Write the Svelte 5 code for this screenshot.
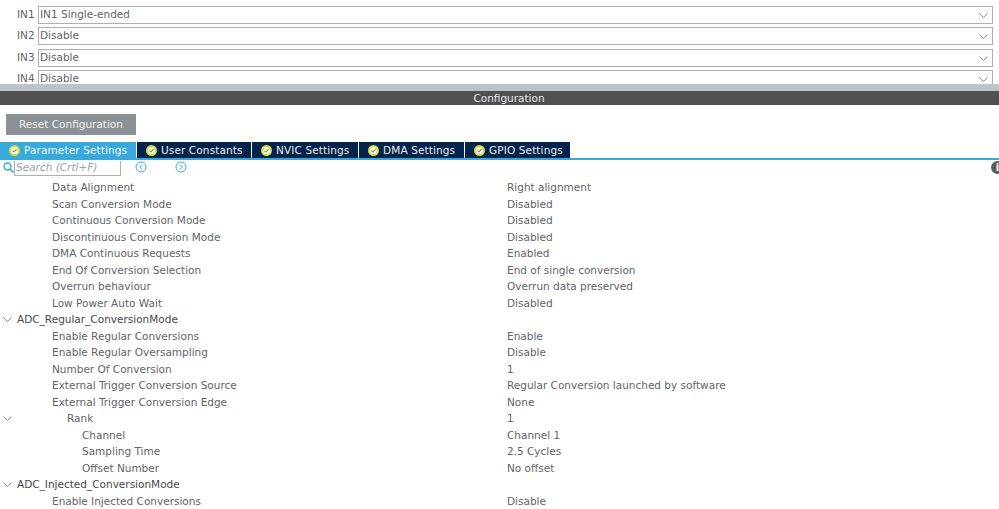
<script lang="ts">
  const inputs = [
    { label: "IN1", value: "IN1 Single-ended" },
    { label: "IN2", value: "Disable" },
    { label: "IN3", value: "Disable" },
    { label: "IN4", value: "Disable" },
  ];

  const tabs = [
    { label: "Parameter Settings", width: 136 },
    { label: "User Constants", width: 114 },
    { label: "NVIC Settings", width: 106 },
    { label: "DMA Settings", width: 105 },
    { label: "GPIO Settings", width: 105 },
  ];

  // level: 0 = group, 1 = parameter, 2 = rank, 3 = rank child
  const rows = [
    { level: 1, name: "Data Alignment", value: "Right alignment" },
    { level: 1, name: "Scan Conversion Mode", value: "Disabled" },
    { level: 1, name: "Continuous Conversion Mode", value: "Disabled" },
    { level: 1, name: "Discontinuous Conversion Mode", value: "Disabled" },
    { level: 1, name: "DMA Continuous Requests", value: "Enabled" },
    { level: 1, name: "End Of Conversion Selection", value: "End of single conversion" },
    { level: 1, name: "Overrun behaviour", value: "Overrun data preserved" },
    { level: 1, name: "Low Power Auto Wait", value: "Disabled" },
    { level: 0, name: "ADC_Regular_ConversionMode", value: "", open: true },
    { level: 1, name: "Enable Regular Conversions", value: "Enable" },
    { level: 1, name: "Enable Regular Oversampling", value: "Disable" },
    { level: 1, name: "Number Of Conversion", value: "1" },
    { level: 1, name: "External Trigger Conversion Source", value: "Regular Conversion launched by software" },
    { level: 1, name: "External Trigger Conversion Edge", value: "None" },
    { level: 2, name: "Rank", value: "1", open: true },
    { level: 3, name: "Channel", value: "Channel 1" },
    { level: 3, name: "Sampling Time", value: "2.5 Cycles" },
    { level: 3, name: "Offset Number", value: "No offset" },
    { level: 0, name: "ADC_Injected_ConversionMode", value: "", open: true },
    { level: 1, name: "Enable Injected Conversions", value: "Disable" },
  ];
</script>

{#snippet chevron()}
  <svg class="chevron" width="9" height="5" viewBox="0 0 9 5">
    <path d="M0.5 0.5 L4.5 4.5 L8.5 0.5" fill="none" stroke="#8a9197" stroke-width="1" />
  </svg>
{/snippet}

<div class="page">
  <div class="inputs">
    {#each inputs as input}
      <div class="input-row">
        <span class="input-label">{input.label}</span>
        <div class="select">
          <span class="select-text">{input.value}</span>
          {@render chevron()}
        </div>
      </div>
    {/each}
  </div>

  <div class="splitter"></div>
  <div class="header">Configuration</div>

  <div class="toolbar">
    <button class="reset">Reset Configuration</button>
  </div>

  <div class="tabs">
    {#each tabs as tab, i}
      <div class="tab" class:active={i === 0} style="width: {tab.width}px">
        <svg width="11" height="11" viewBox="0 0 11 11">
          <circle cx="5.5" cy="5.5" r="5.5" fill="#d5dc3c" />
          <circle cx="5.5" cy="5.5" r="3.6" fill="#fff" />
          <path d="M3.4 5.6 L5 7 L7.6 4.2" fill="none" stroke="#8d9a3a" stroke-width="1.2" />
        </svg>
        <span>{tab.label}</span>
      </div>
    {/each}
  </div>

  <div class="searchbar">
    <svg class="lens" width="11" height="11" viewBox="0 0 11 11">
      <circle cx="4.5" cy="4.5" r="3.5" fill="none" stroke="#39a9dc" stroke-width="1.4" />
      <path d="M7 7 L10.5 10.5" stroke="#39a9dc" stroke-width="1.6" />
    </svg>
    <div class="search">Search (Crtl+F)</div>
    <svg class="nav first" width="12" height="12" viewBox="0 0 12 12">
      <circle cx="6" cy="6" r="5" fill="none" stroke="#39a9dc" />
      <path d="M7 3.6 L4.6 6 L7 8.4" fill="none" stroke="#39a9dc" />
    </svg>
    <svg class="nav second" width="12" height="12" viewBox="0 0 12 12">
      <circle cx="6" cy="6" r="5" fill="none" stroke="#39a9dc" />
      <path d="M5 3.6 L7.4 6 L5 8.4" fill="none" stroke="#39a9dc" />
    </svg>
    <div class="info">i</div>
  </div>

  <div class="tree">
    {#each rows as row}
      <div class="row">
        <div class="name level-{row.level}">
          {#if row.open}
            <svg class="twist" width="9" height="5" viewBox="0 0 9 5">
              <path d="M0.5 0.5 L4.5 4.5 L8.5 0.5" fill="none" stroke="#8a9197" />
            </svg>
          {/if}
          {row.name}
        </div>
        <div class="value">{row.value}</div>
      </div>
    {/each}
  </div>
</div>

<style>
  :global(body) {
    margin: 0;
    background: #fff;
  }

  .page {
    width: 999px;
    height: 509px;
    overflow: hidden;
    font-family: "DejaVu Sans", sans-serif;
    font-size: 10.5px;
    color: #5f6468;
  }

  .inputs {
    height: 84px;
    overflow: hidden;
    padding-top: 6px;
    box-sizing: border-box;
  }

  .input-row {
    display: flex;
    align-items: center;
    height: 18px;
    margin-bottom: 3.4px;
  }

  .input-label {
    width: 38px;
    box-sizing: border-box;
    padding: 0 0 2px 17px;
  }

  .select {
    width: 955px;
    height: 18px;
    box-sizing: border-box;
    border: 1px solid #a9b1b5;
    display: flex;
    align-items: center;
    justify-content: space-between;
    padding: 0 4px 0 1px;
    flex: none;
  }

  .select-text {
    padding-bottom: 2px;
  }

  .chevron {
    margin-top: 1px;
  }

  .splitter {
    height: 7px;
    background: #b9c5cb;
  }

  .header {
    height: 14px;
    background: #505050;
    color: #e6e9ea;
    text-align: center;
    line-height: 15px;
    padding-left: 19px;
  }

  .toolbar {
    padding: 9px 0 0 6px;
    height: 28px;
  }

  .reset {
    display: block;
    width: 130px;
    height: 21px;
    padding: 0 0 2px;
    border: none;
    background: #8c9196;
    color: #eef0f1;
    font: inherit;
  }

  .tabs {
    display: flex;
    gap: 1px;
    height: 16px;
    border-bottom: 2px solid #39a9dc;
  }

  .tab {
    flex: none;
    background: #03234b;
    color: #e8edf2;
    display: flex;
    align-items: center;
    gap: 4px;
    padding-left: 9px;
    box-sizing: border-box;
    letter-spacing: 0.12px;
  }

  .tab.active {
    background: #39a9dc;
    color: #f2f8fb;
  }

  .searchbar {
    display: flex;
    align-items: flex-start;
    height: 16px;
    margin-top: 1px;
    position: relative;
  }

  .lens {
    margin: 1px 0 0 3px;
  }

  .search {
    width: 107px;
    height: 15px;
    box-sizing: border-box;
    border: 1px solid #a9b1b5;
    border-width: 0 1px 1px 1px;
    font-style: italic;
    color: #9a9fa3;
    line-height: 12px;
    padding-left: 1px;
  }

  .nav.first {
    margin-left: 14px;
  }

  .nav.second {
    margin-left: 28px;
  }

  .info {
    position: absolute;
    right: -5px;
    top: 0;
    width: 13px;
    height: 13px;
    border-radius: 50%;
    background: #5a5a5a;
    color: #fff;
    font-weight: bold;
    font-size: 10px;
    line-height: 13px;
    text-align: center;
  }

  .tree {
    margin-top: 2.25px;
  }

  .row {
    display: flex;
    height: 16.5px;
    line-height: 16.5px;
    white-space: nowrap;
  }

  .name {
    width: 507px;
    box-sizing: border-box;
    flex: none;
    position: relative;
  }

  .level-0 {
    padding-left: 17px;
    color: #45494d;
  }

  .level-1 {
    padding-left: 52px;
  }

  .level-2 {
    padding-left: 67px;
  }

  .level-3 {
    padding-left: 82px;
  }

  .twist {
    position: absolute;
    left: 3px;
    top: 6px;
  }
</style>
